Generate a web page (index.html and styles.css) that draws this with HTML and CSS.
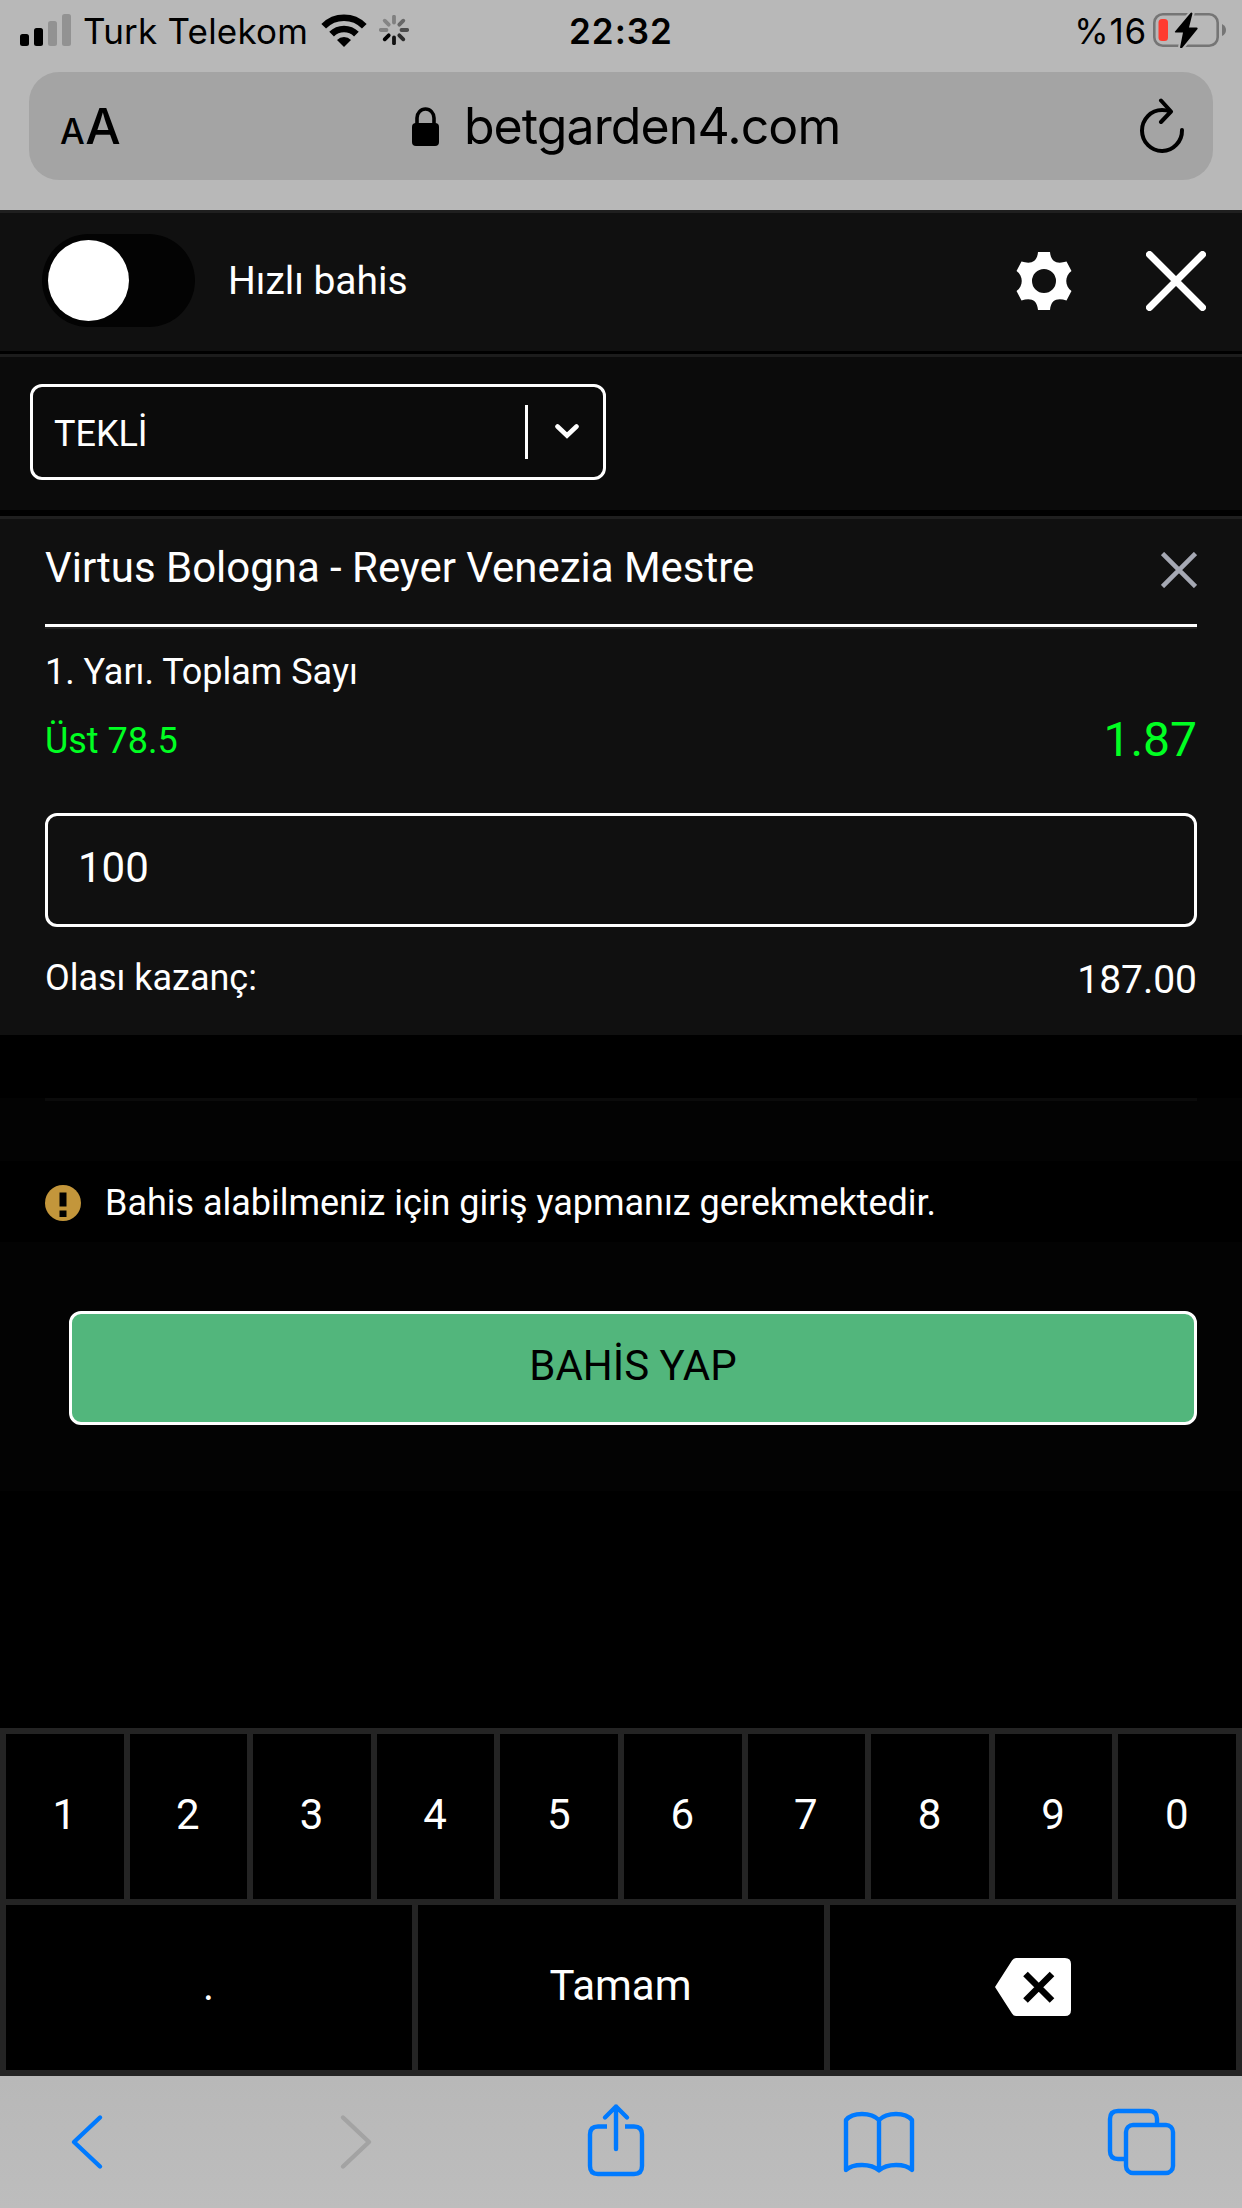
FILE: index.html
```html
<!DOCTYPE html>
<html lang="tr">
<head>
    <meta charset="UTF-8">
    <meta name="viewport" content="width=device-width, initial-scale=1.0">
    <title>Kupon</title>
    <link rel="stylesheet" href="styles.css">
</head>
<body>
    <div class="browser-top">
        <div class="status-bar">
            <div class="status-left">
                <svg class="signal" width="51" height="32" viewBox="0 0 51 32">
                    <rect x="0" y="20" width="9" height="12" rx="2.5"/>
                    <rect x="14" y="14" width="9" height="18" rx="2.5"/>
                    <rect x="28" y="7" width="9" height="25" rx="2.5" fill="#929292"/>
                    <rect x="42" y="0" width="9" height="32" rx="2.5" fill="#929292"/>
                </svg>
                <span class="carrier">Turk Telekom</span>
                <svg class="wifi" width="46" height="33" viewBox="0 0 46 33">
                    <path d="M2.7 12.2 A28.6 28.6 0 0 1 43.3 12.2" fill="none" stroke="#000" stroke-width="6.6"/>
                    <path d="M10.6 20.2 A17.5 17.5 0 0 1 35.4 20.2" fill="none" stroke="#000" stroke-width="6.6"/>
                    <path d="M16 26 A9.8 9.8 0 0 1 30 26 L23 33 Z"/>
                </svg>
                <svg class="spinner" width="30" height="30" viewBox="-15 -15 30 30" stroke-width="3.8" stroke-linecap="round">
                    <path d="M0 -7.5 V-13.2" stroke="#808080"/>
                    <path d="M5.3 -5.3 L9.3 -9.3" stroke="#686868"/>
                    <path d="M7.5 0 H13.2" stroke="#4d4d4d"/>
                    <path d="M5.3 5.3 L9.3 9.3" stroke="#2c2c2c"/>
                    <path d="M0 7.5 V13.2" stroke="#111"/>
                    <path d="M-5.3 5.3 L-9.3 9.3" stroke="#000"/>
                    <path d="M-7.5 0 H-13.2" stroke="#828282"/>
                    <path d="M-5.3 -5.3 L-9.3 -9.3" stroke="#858585"/>
                </svg>
            </div>
            <span class="clock">22:32</span>
            <div class="status-right">
                <span class="percent">%16</span>
                <svg class="battery" width="74" height="36" viewBox="0 0 74 36">
                    <rect x="1.3" y="2.3" width="63.4" height="31.4" rx="8.5" fill="none" stroke="#757575" stroke-width="2.6"/>
                    <path d="M69 12 Q73 14 73 18 Q73 22 69 24 Z" fill="#757575"/>
                    <rect x="5.5" y="7" width="9.5" height="22" rx="3.5" fill="#ff3b30"/>
                    <path d="M37.5 1 L22 19.5 Q21.5 20.5 22.5 20.5 H30 L27 35.5 Q28 37 29.5 35.5 L44.5 17 Q45 15.5 43.5 15.5 H36 L39.5 1.5 Q38.5 0 37.5 1 Z" stroke="#b8b8b8" stroke-width="4" paint-order="stroke"/>
                </svg>
            </div>
        </div>
        <div class="address-bar">
            <span class="text-size"><small>A</small>A</span>
            <div class="address">
                <svg class="lock" width="27" height="39" viewBox="0 0 27 39">
                    <rect x="0" y="16" width="27" height="23" rx="4"/>
                    <path d="M5 18 V11 A8.5 9 0 0 1 22 11 V18" fill="none" stroke="#000" stroke-width="3.6"/>
                </svg>
                <span>betgarden4.com</span>
            </div>
            <svg class="reload" width="46" height="56" viewBox="0 0 46 56" fill="none" stroke="#000" stroke-width="4" stroke-linecap="round" stroke-linejoin="round">
                <path d="M43 32 A20 20.5 0 1 1 23 12 Q28 12 31 13.5"/>
                <path d="M22 2.5 L32 13.5 L22 24"/>
            </svg>
        </div>
    </div>

    <div class="slip-header">
        <div class="toggle"><div class="toggle-knob"></div></div>
        <span class="quick-bet">Hızlı bahis</span>
        <svg class="gear" width="56" height="58" viewBox="-28 -29 56 58">
            <path fill="#fff" fill-rule="evenodd" d="M-6 -29 H6 C7 -18 14 -17 22.500 -19.500 L27.500 -10 C20.500 -5 20.500 5 27.500 10 L22.500 19.500 C14 17 7 18 6 29 H-6 C-7 18 -14 17 -22.500 19.500 L-27.500 10 C-20.500 5 -20.500 -5 -27.500 -10 L-22.500 -19.500 C-14 -17 -7 -18 -6 -29 Z M0 -12 A12 12 0 1 0 0 12 A12 12 0 1 0 0 -12 Z"/>
        </svg>
        <svg class="close" width="60" height="60" viewBox="0 0 60 60">
            <path d="M3.500 3.500 L56.500 56.500 M56.500 3.500 L3.500 56.500" stroke="#fff" stroke-width="7" stroke-linecap="round"/>
        </svg>
    </div>

    <div class="slip-type">
        <div class="select">
            <span class="select-value">TEKLİ</span>
            <span class="select-separator"></span>
            <svg class="select-arrow" width="24" height="15" viewBox="0 0 24 15">
                <path d="M2.500 2.500 L12 11.500 L21.500 2.500" fill="none" stroke="#fff" stroke-width="4.600" stroke-linecap="round"/>
            </svg>
        </div>
    </div>

    <div class="bet">
        <div class="bet-title">
            <span>Virtus Bologna - Reyer Venezia Mestre</span>
            <svg width="36" height="36" viewBox="0 0 36 36">
                <path d="M1.500 1.500 L34.500 34.500 M34.500 1.500 L1.500 34.500" stroke="#a5a8b3" stroke-width="4.600"/>
            </svg>
        </div>
        <div class="bet-market">1. Yarı. Toplam Sayı</div>
        <div class="bet-outcome">
            <span>Üst 78.5</span>
            <span class="odds">1.87</span>
        </div>
        <div class="stake">100</div>
        <div class="bet-win">
            <span>Olası kazanç:</span>
            <span class="win-amount">187.00</span>
        </div>
    </div>

    <div class="slip-footer">
        <div class="divider"></div>
        <div class="warning">
            <svg width="36" height="36" viewBox="0 0 36 36">
                <circle cx="18" cy="18" r="18" fill="#c3963b"/>
                <path d="M14.500 7.500 h7 v14 h-7 Z M14.500 25.500 h7 v6.500 h-7 Z"/>
            </svg>
            <span>Bahis alabilmeniz için giriş yapmanız gerekmektedir.</span>
        </div>
        <div class="place-bet">
            <button class="bet-button">BAHİS YAP</button>
        </div>
    </div>

    <div class="keypad">
        <div class="keys keys-digits">
            <div class="key">1</div>
            <div class="key">2</div>
            <div class="key">3</div>
            <div class="key">4</div>
            <div class="key">5</div>
            <div class="key">6</div>
            <div class="key">7</div>
            <div class="key">8</div>
            <div class="key">9</div>
            <div class="key">0</div>
        </div>
        <div class="keys keys-actions">
            <div class="key">.</div>
            <div class="key">Tamam</div>
            <div class="key key-delete">
                <svg width="76" height="58" viewBox="0 0 76 58">
                    <path d="M21 0 H70 Q76 0 76 6 V52 Q76 58 70 58 H21 Q18.500 58 17 55.500 L0 29 L17 2.500 Q18.500 0 21 0 Z" fill="#fff"/>
                    <path d="M30.500 16 L57 42.500 M57 16 L30.500 42.500" stroke="#000" stroke-width="6.500"/>
                </svg>
            </div>
        </div>
    </div>

    <div class="toolbar">
        <svg class="back" width="31" height="54" viewBox="0 0 31 54">
            <path d="M29 2.500 L3 27 L29 51.500"/>
        </svg>
        <svg class="forward" width="31" height="54" viewBox="0 0 31 54">
            <path d="M2 2.500 L28 27 L2 51.500"/>
        </svg>
        <svg class="share" width="56" height="72" viewBox="0 0 56 72">
            <path stroke-linecap="butt" d="M19 22.500 H10 Q2 22.500 2 30.500 V62 Q2 70 10 70 H46 Q54 70 54 62 V30.500 Q54 22.500 46 22.500 H37"/>
            <path d="M28 45 V2.500 M17 13.500 L28 2.500 L39 13.500"/>
        </svg>
        <svg class="book" width="70" height="61" viewBox="0 0 70 61">
            <path d="M35 8 Q29 2 18 2 Q7 2 2 8 V58 Q7 53 18 53 Q29 53 35 58.500 Q41 53 52 53 Q63 53 68 58 V8 Q63 2 52 2 Q41 2 35 8 Z M35 8 V58"/>
        </svg>
        <svg class="tabs" width="67" height="66" viewBox="0 0 67 66">
            <path stroke-linecap="butt" d="M18 50 H10 Q2 50 2 42 V10 Q2 2 10 2 H41 Q49 2 49 10 V16"/>
            <rect x="18" y="16" width="47" height="48" rx="7"/>
        </svg>
    </div>
</body>
</html>
```
FILE: styles.css
```css
* {
    box-sizing: border-box;
}

body {
    margin: 0;
    width: 1242px;
    height: 2208px;
    display: flex;
    flex-direction: column;
    overflow: hidden;
    background-color: #000;
    color: #fff;
    font-family: Roboto, sans-serif;
    font-size: 36px;
    letter-spacing: -0.03px;
}

svg {
    display: block;
    flex: none;
}

/* Browser chrome */
.browser-top {
    height: 210px;
    background-color: #b8b8b8;
    color: #000;
    font-family: Inter, "Liberation Sans", sans-serif;
}

.status-bar {
    display: grid;
    grid-template-columns: 1fr auto 1fr;
    align-items: center;
    height: 72px;
    padding: 0 15px 12px 20px;
    line-height: 44px;
}

.status-left,
.status-right {
    display: flex;
    align-items: center;
}

.status-right {
    justify-content: flex-end;
}

.carrier {
    width: 224px;
    margin: 1px 14px 0 12px;
    font-size: 35px;
    letter-spacing: 0.2px;
    white-space: nowrap;
}

.spinner {
    margin-left: 12px;
}

.clock {
    margin: 1px 5px 0 0;
    font-size: 35px;
    font-weight: 600;
    letter-spacing: 1px;
}

.percent {
    margin: 1px 6px 0 0;
    font-size: 35px;
    letter-spacing: 0.8px;
}

.address-bar {
    display: flex;
    align-items: center;
    height: 108px;
    margin: 0 29px;
    padding: 0 28px 0 31px;
    border-radius: 30px;
    background-color: #a4a4a4;
}

.text-size {
    margin-top: 5px;
    font-size: 50px;
    font-weight: 500;
    letter-spacing: -1.5px;
    line-height: 60px;
}

.text-size small {
    margin-right: 2px;
    font-size: 35px;
}

.address {
    display: flex;
    flex: 1;
    align-items: center;
    justify-content: center;
    gap: 25px;
    padding-right: 6px;
    font-size: 50px;
    letter-spacing: -0.9px;
}

/* Bet slip */
.slip-header {
    display: flex;
    align-items: center;
    height: 144px;
    padding: 0 36px 3px 42px;
    border-top: 3px solid #1f1f1f;
    border-bottom: 3px solid #000;
    background-color: #101010;
}

.toggle {
    width: 153px;
    height: 93px;
    padding: 6px;
    border-radius: 47px;
    background-color: #030303;
}

.toggle-knob {
    width: 81px;
    height: 81px;
    border-radius: 50%;
    background-color: #fff;
}

.quick-bet {
    margin-left: 33px;
    font-size: 39px;
}

.gear {
    margin-left: auto;
}

.close {
    margin-left: 74px;
}

.slip-type {
    height: 162px;
    padding: 27px 30px;
    border-top: 3px solid #1c1c1c;
    border-bottom: 6px solid #000;
    background-color: #0b0b0b;
}

.select {
    display: flex;
    align-items: center;
    width: 576px;
    height: 96px;
    padding: 0 24px 0 21px;
    border: 3px solid #fff;
    border-radius: 12px;
}

.select-value {
    flex: 1;
    margin-top: 3px;
}

.select-separator {
    width: 3px;
    height: 54px;
    margin-right: 27px;
    background-color: #fff;
}

.select-arrow {
    margin-bottom: 2px;
}

.bet {
    height: 519px;
    padding: 0 45px;
    border-top: 3px solid #1f1f1f;
    background-color: #101010;
}

.bet-title {
    display: flex;
    align-items: center;
    justify-content: space-between;
    height: 108px;
    padding-bottom: 8px;
    border-bottom: 3px solid #fff;
    box-shadow: 0 2px 0 #222;
    font-size: 42px;
}

.bet-title svg {
    margin-top: 4px;
}

.bet-market {
    height: 90px;
    line-height: 90px;
}

.bet-outcome {
    display: flex;
    justify-content: space-between;
    height: 48px;
    line-height: 48px;
    color: #00ff22;
}

.odds {
    font-size: 48px;
    line-height: 45px;
}

.stake {
    height: 114px;
    margin-top: 48px;
    padding-left: 30px;
    border: 3px solid #fff;
    border-radius: 12px;
    font-size: 42px;
    line-height: 103px;
}

.bet-win {
    display: flex;
    align-items: center;
    justify-content: space-between;
    height: 108px;
    padding-bottom: 6px;
}

.win-amount {
    margin-top: 4px;
    font-size: 39px;
}

.slip-footer {
    height: 393px;
    margin-top: 63px;
    background-color: #030303;
}

.divider {
    height: 63px;
    margin: 0 45px;
    border-top: 3px solid #0b0b0b;
}

.warning {
    display: flex;
    align-items: center;
    gap: 24px;
    height: 81px;
    padding: 2px 45px 0;
    background-color: #000;
}

.place-bet {
    padding: 69px 45px 0 69px;
}

.bet-button {
    display: block;
    width: 100%;
    height: 114px;
    padding: 0 0 6px;
    border: 3px solid #fff;
    border-radius: 12px;
    background-color: #52b67c;
    color: #000;
    font-family: inherit;
    font-size: 42px;
}

/* Numeric keypad */
.keypad {
    display: flex;
    flex-direction: column;
    gap: 6px;
    height: 348px;
    margin-top: 237px;
    padding: 6px;
    background-color: #242424;
}

.keys {
    display: grid;
    gap: 6px;
    height: 165px;
}

.keys-digits {
    grid-template-columns: repeat(10, 1fr);
}

.keys-actions {
    grid-template-columns: repeat(3, 1fr);
}

.key {
    display: flex;
    align-items: center;
    justify-content: center;
    padding: 0 1px 4px 0;
    background-color: #000;
    font-size: 42px;
}

.key-delete {
    padding-bottom: 1px;
}

.toolbar {
    display: flex;
    align-items: center;
    height: 132px;
    padding-left: 71px;
    background: linear-gradient(#b8b8b8, #bdbdbd);
}

.toolbar svg {
    overflow: visible;
    fill: none;
    stroke: #007aff;
    stroke-width: 4.4;
    stroke-linecap: round;
    stroke-linejoin: round;
}

.toolbar .forward {
    margin-left: 239px;
    stroke: #a3a3a3;
}

.toolbar .share {
    margin: 0 0 4px 216px;
}

.toolbar .book {
    margin-left: 200px;
}

.toolbar .tabs {
    margin-left: 194px;
}
```
